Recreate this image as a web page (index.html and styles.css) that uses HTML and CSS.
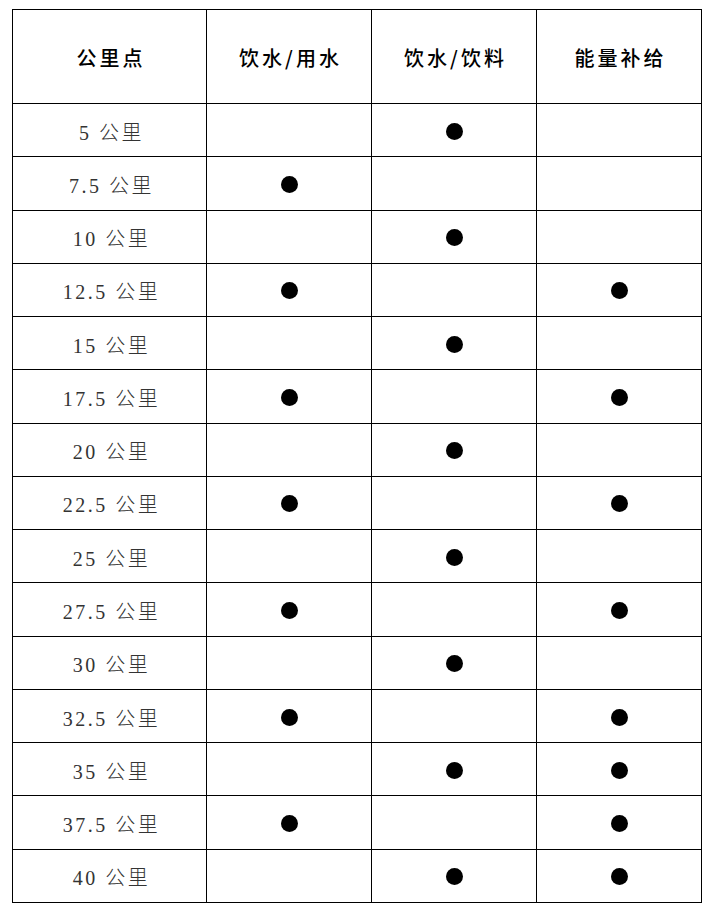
FILE: index.html
```html
<!DOCTYPE html>
<html lang="zh-CN">
<head>
<meta charset="utf-8">
<title>补给站</title>
<link rel="stylesheet" href="styles.css">
</head>
<body>
<div class="grid">
  <div class="cell head">公里点</div>
  <div class="cell head">饮水/用水</div>
  <div class="cell head">饮水/饮料</div>
  <div class="cell head">能量补给</div>

  <div class="cell km">5 公里</div><div class="cell"></div><div class="cell"><span class="dot"></span></div><div class="cell"></div>
  <div class="cell km">7.5 公里</div><div class="cell"><span class="dot"></span></div><div class="cell"></div><div class="cell"></div>
  <div class="cell km">10 公里</div><div class="cell"></div><div class="cell"><span class="dot"></span></div><div class="cell"></div>
  <div class="cell km">12.5 公里</div><div class="cell"><span class="dot"></span></div><div class="cell"></div><div class="cell"><span class="dot"></span></div>
  <div class="cell km">15 公里</div><div class="cell"></div><div class="cell"><span class="dot"></span></div><div class="cell"></div>
  <div class="cell km">17.5 公里</div><div class="cell"><span class="dot"></span></div><div class="cell"></div><div class="cell"><span class="dot"></span></div>
  <div class="cell km">20 公里</div><div class="cell"></div><div class="cell"><span class="dot"></span></div><div class="cell"></div>
  <div class="cell km">22.5 公里</div><div class="cell"><span class="dot"></span></div><div class="cell"></div><div class="cell"><span class="dot"></span></div>
  <div class="cell km">25 公里</div><div class="cell"></div><div class="cell"><span class="dot"></span></div><div class="cell"></div>
  <div class="cell km">27.5 公里</div><div class="cell"><span class="dot"></span></div><div class="cell"></div><div class="cell"><span class="dot"></span></div>
  <div class="cell km">30 公里</div><div class="cell"></div><div class="cell"><span class="dot"></span></div><div class="cell"></div>
  <div class="cell km">32.5 公里</div><div class="cell"><span class="dot"></span></div><div class="cell"></div><div class="cell"><span class="dot"></span></div>
  <div class="cell km">35 公里</div><div class="cell"></div><div class="cell"><span class="dot"></span></div><div class="cell"><span class="dot"></span></div>
  <div class="cell km">37.5 公里</div><div class="cell"><span class="dot"></span></div><div class="cell"></div><div class="cell"><span class="dot"></span></div>
  <div class="cell km">40 公里</div><div class="cell"></div><div class="cell"><span class="dot"></span></div><div class="cell"><span class="dot"></span></div>
</div>
</body>
</html>
```
FILE: styles.css
```css
html, body {
  margin: 0;
  padding: 0;
  background: #ffffff;
}
body {
  font-family: "Liberation Serif", "Noto Sans CJK SC", serif;
}
.grid {
  display: grid;
  grid-template-columns: 193px 164px 164px 164px;
  grid-template-rows: 93px repeat(15, 52.27px);
  gap: 1px;
  padding: 1px;
  background: #000000;
  width: 688px;
  margin: 9px 0 0 12px;
}
.cell {
  background: #ffffff;
  display: flex;
  align-items: center;
  justify-content: center;
  padding-top: 2px;
}
.head {
  font-family: "Noto Sans CJK SC", sans-serif;
  font-size: 20px;
  font-weight: 500;
  letter-spacing: 3px;
  color: #000000;
  padding-left: 3px;
}
.km {
  font-size: 20px;
  font-weight: 300;
  letter-spacing: 2.5px;
  color: #333333;
  padding-left: 4px;
}
.dot {
  width: 17px;
  height: 17px;
  border-radius: 50%;
  background: #000000;
}
```
